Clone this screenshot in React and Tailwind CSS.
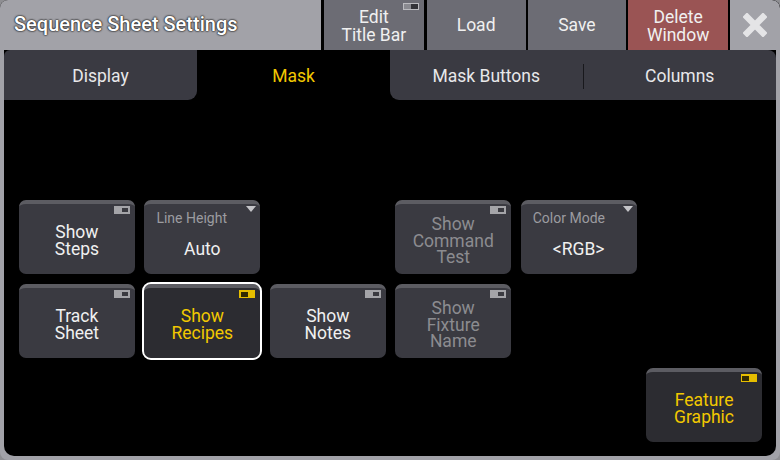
import React from 'react';

const font = { fontFamily: 'Roboto, "Noto Sans", sans-serif' };

function Toggle({ on }) {
  if (on) {
    return (
      <div className="absolute top-[2px] right-[5px] w-[16px] h-[8px] bg-[#e6be00] p-[1.5px] flex justify-start">
        <div className="w-[7px] h-full bg-[#332b00]" />
      </div>
    );
  }
  return (
    <div className="absolute top-[2px] right-[5px] w-[16px] h-[8px] bg-[#a4a4a8] p-[1px] flex justify-end">
      <div className="w-[8px] h-full bg-[#3a3a40] border border-[#a4a4a8]" />
    </div>
  );
}

function Triangle() {
  return (
    <svg className="absolute top-[2px] right-[4px]" width="10" height="7" viewBox="0 0 10 7">
      <polygon points="0,0 10,0 5,6" fill="#c4c4c8" />
    </svg>
  );
}

function Btn({ lines, pos, on, disabled, selected }) {
  const color = on ? 'text-[#f2c800]' : disabled ? 'text-[#8c8c90]' : 'text-[#f0f0f0]';
  return (
    <div
      className={`relative ${pos} rounded-[7px] border-t-[4px] border-[#5c5c62] pt-[4px] flex flex-col items-center justify-center text-[17.5px] leading-[16.7px] ${color} ${
        on ? 'bg-[#2c2c31]' : 'bg-[#3a3a41]'
      } ${selected ? 'outline-2 outline-white outline-offset-[0px]' : ''}`}
    >
      <Toggle on={on} />
      {lines.map((l) => (
        <div key={l}>{l}</div>
      ))}
    </div>
  );
}

function Select({ label, value, pos }) {
  return (
    <div className={`relative ${pos} rounded-[7px] border-t-[4px] border-[#5c5c62] bg-[#3a3a41] flex flex-col`}>
      <Triangle />
      <div className="pl-[12px] pt-[6px] text-[14px] leading-[16px] text-[#9c9ca0]">{label}</div>
      <div className="flex-1 flex items-center justify-center pb-[2px] text-[17.5px] text-[#f0f0f0]">{value}</div>
    </div>
  );
}

export default function App() {
  return (
    <div className="w-[780px] h-[460px] bg-[#8e8e92]" style={font}>
      <div className="w-[780px] h-[460px] bg-[#a2a2a8] rounded-[8px] overflow-hidden flex flex-col">
        {/* title bar */}
        <div className="h-[50px] flex bg-black">
          <div className="w-[321px] bg-[#a2a2a8] flex items-center pl-[14px] pb-[2px] text-white text-[20px] font-medium [text-shadow:0_0_2px_#2a2a2a,0_0_2px_#2a2a2a,0_0_1px_#000]">
            Sequence Sheet Settings
          </div>
          <div className="ml-[3px] flex gap-[2px] w-[404px]">
            <div className="relative w-[100px] bg-[#6c6c74] flex flex-col items-center justify-center text-[17.5px] leading-[18px] text-[#f0f0f0]">
              <div className="absolute top-[3px] right-[5px] w-[16px] h-[7px] border border-[#bcbcc0] bg-[#8a8a90] flex justify-end">
                <div className="w-[7px] h-full bg-[#333338]" />
              </div>
              <div className="mt-[2px]">Edit</div>
              <div>Title Bar</div>
            </div>
            <div className="w-[99px] bg-[#6c6c74] flex items-center justify-center text-[17.5px] text-[#f0f0f0] ml-[1px]">Load</div>
            <div className="w-[99px] bg-[#6c6c74] flex items-center justify-center text-[17.5px] text-[#f0f0f0]">Save</div>
            <div className="w-[100px] bg-[#9a5454] flex flex-col items-center justify-center text-[17.5px] leading-[18px] text-[#f0f0f0]">
              <div className="mt-[2px]">Delete</div>
              <div>Window</div>
            </div>
          </div>
          <div className="flex-1 ml-[2px] bg-[#a2a2a8] rounded-tr-[8px] flex items-center justify-center">
            <svg width="24" height="24" viewBox="0 0 24 24">
              <path d="M4 4 L20 20 M20 4 L4 20" stroke="#e4e4e6" strokeWidth="6.5" strokeLinecap="square" />
            </svg>
          </div>
        </div>

        {/* body */}
        <div className="flex-1 mx-[4px] mb-[4px] bg-black rounded-b-[10px] flex flex-col overflow-hidden">
          <div className="h-[50px] flex text-[17.5px] text-[#e8e8ea]">
            <div className="w-[193px] bg-[#3a3a42] rounded-tl-[6px] rounded-br-[9px] flex items-center justify-center pt-[2px]">Display</div>
            <div className="w-[193px] flex items-center justify-center pt-[2px] text-[#f2c800]">Mask</div>
            <div className="flex-1 bg-[#3a3a42] rounded-bl-[9px] rounded-tr-[8px] flex items-center pt-[2px]">
              <div className="flex-1 flex items-center justify-center">Mask Buttons</div>
              <div className="w-[1px] h-[25px] bg-[#18181c]" />
              <div className="flex-1 flex items-center justify-center">Columns</div>
            </div>
          </div>

          <div className="flex-1 grid grid-cols-6 grid-rows-[repeat(4,74px)] gap-x-[9.6px] gap-y-[10px] pl-[15px] pr-[14px] pt-[16px]">
            <Btn pos="col-start-1 row-start-2" lines={['Show', 'Steps']} />
            <Select pos="col-start-2 row-start-2" label="Line Height" value="Auto" />
            <Btn pos="col-start-4 row-start-2" lines={['Show', 'Command', 'Test']} disabled />
            <Select pos="col-start-5 row-start-2" label="Color Mode" value="<RGB>" />
            <Btn pos="col-start-1 row-start-3" lines={['Track', 'Sheet']} />
            <Btn pos="col-start-2 row-start-3" lines={['Show', 'Recipes']} on selected />
            <Btn pos="col-start-3 row-start-3" lines={['Show', 'Notes']} />
            <Btn pos="col-start-4 row-start-3" lines={['Show', 'Fixture', 'Name']} disabled />
            <Btn pos="col-start-6 row-start-4" lines={['Feature', 'Graphic']} on />
          </div>
        </div>
      </div>
    </div>
  );
}
